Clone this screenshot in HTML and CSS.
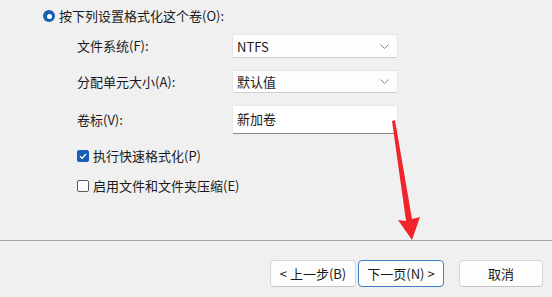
FILE: index.html
```html
<!DOCTYPE html>
<html lang="zh-CN">
<head>
<meta charset="utf-8">
<link rel="stylesheet" href="styles.css">
</head>
<body>
<div class="page">
  <div class="content">
    <div class="radio-row">
      <span class="radio"></span>
      <span>按下列设置格式化这个卷(O):</span>
    </div>
    <div class="form">
      <div class="label">文件系统(F):</div>
      <div class="select s1"><span>NTFS</span><svg class="chev" viewBox="0 0 9 5" width="9" height="5"><path d="M0.5 0.5 L4.5 4.5 L8.5 0.5" fill="none" stroke="#8a8a8a" stroke-width="1"/></svg></div>
      <div class="label">分配单元大小(A):</div>
      <div class="select s2"><span>默认值</span><svg class="chev" viewBox="0 0 9 5" width="9" height="5"><path d="M0.5 0.5 L4.5 4.5 L8.5 0.5" fill="none" stroke="#8a8a8a" stroke-width="1"/></svg></div>
      <div class="label">卷标(V):</div>
      <div class="textbox"><span>新加卷</span></div>
    </div>
    <div class="checks">
      <div class="check-row"><span class="checkbox checked"><svg viewBox="0 0 12 12" width="12" height="12"><path d="M3 6.2 L5.2 8.3 L9 4" fill="none" stroke="#fff" stroke-width="1.3"/></svg></span><span>执行快速格式化(P)</span></div>
      <div class="check-row"><span class="checkbox"></span><span>启用文件和文件夹压缩(E)</span></div>
    </div>
  </div>
  <div class="footer">
    <button class="btn">&lt; 上一步(B)</button>
    <button class="btn primary">下一页(N) &gt;</button>
    <button class="btn cancel">取消</button>
  </div>
  <svg class="arrow" width="552" height="297" viewBox="0 0 552 297">
    <path d="M392 121 L395 120 L412 219 L420 217 L412 240 L398 220 L406 221 Z" fill="#f0242a"/>
  </svg>
</div>
</body>
</html>
```
FILE: styles.css
```css
html, body {
  margin: 0;
  padding: 0;
}
body {
  background: #f0f0f0;
  font-family: "Noto Sans CJK SC", "Noto Sans", sans-serif;
  font-size: 13px;
  color: #1a1a1a;
  width: 552px;
  height: 297px;
  overflow: hidden;
}
.page {
  position: relative;
  width: 552px;
  height: 297px;
}
.content {
  height: 240px;
  padding-left: 43px;
  box-sizing: border-box;
}
.radio-row {
  display: flex;
  align-items: center;
  gap: 4px;
  height: 32px;
  padding-top: 0;
  line-height: 16px;
}
.radio {
  width: 12px;
  height: 12px;
  border-radius: 50%;
  background: #1a5fb4;
  box-sizing: border-box;
  position: relative;
  flex: none;
}
.radio::after {
  content: "";
  position: absolute;
  left: 3.5px;
  top: 3.5px;
  width: 5px;
  height: 5px;
  border-radius: 50%;
  background: #fff;
}
.form {
  display: grid;
  grid-template-columns: 155px 166px;
  grid-template-rows: 24px 23px 29px;
  row-gap: 12px;
  margin-left: 34px;
  margin-top: 2px;
  align-items: center;
}
.label {
  line-height: 16px;
}
.select, .textbox {
  background: #fdfdfd;
  box-sizing: border-box;
  height: 100%;
  display: flex;
  align-items: center;
  padding-left: 4px;
  border: 1px solid #e6e6e6;
  border-bottom-color: #cfcfcf;
  border-radius: 2px;
}
.select {
  justify-content: space-between;
  padding-right: 8px;
}
.chev {
  display: block;
}
.textbox {
  background: #fff;
  border-color: #e8e8e8;
  border-bottom: 1px solid #8a8a8a;
  align-items: flex-start;
  padding-top: 3px;
}
.checks {
  margin-left: 34px;
  margin-top: 14px;
  display: flex;
  flex-direction: column;
  gap: 14px;
}
.check-row {
  display: flex;
  align-items: center;
  gap: 4px;
  height: 16px;
  line-height: 16px;
}
.checkbox {
  width: 12px;
  height: 12px;
  box-sizing: border-box;
  border: 1px solid #5a5a5a;
  border-radius: 2px;
  background: #fff;
  display: flex;
  flex: none;
}
.checkbox.checked {
  background: #1a5fb4;
  border-color: #1a5fb4;
}
.checkbox.checked svg {
  margin: -1px;
}
.footer {
  border-top: 1px solid #a3a3a3;
  height: 57px;
  box-sizing: border-box;
  display: flex;
  align-items: flex-start;
  padding-top: 19px;
  padding-left: 270px;
}
.btn {
  font-family: inherit;
  font-size: 13px;
  color: #1a1a1a;
  background: #fdfdfd;
  border: 1px solid #d5d5d5;
  border-bottom-color: #c4c4c4;
  border-radius: 4px;
  width: 86px;
  height: 27px;
  padding: 0;
  line-height: 16px;
  margin-right: 2px;
}
.btn.primary {
  border: 1px solid #3c7fc1;
  margin-right: 15px;
}
.btn.cancel {
  width: 84px;
}
.arrow {
  position: absolute;
  left: 0;
  top: 0;
  pointer-events: none;
}
```
